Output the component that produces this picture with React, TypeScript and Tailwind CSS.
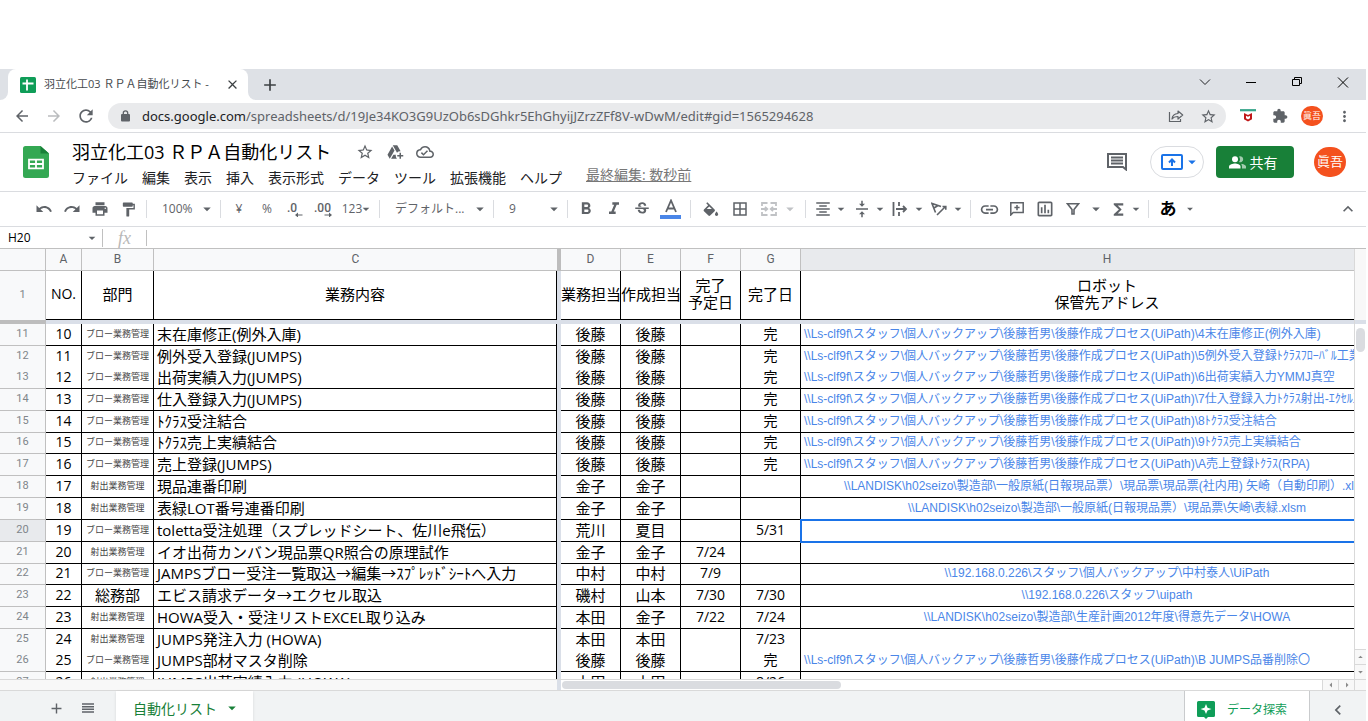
import type { ReactNode } from 'react';
import clsx from 'clsx';
import {
    MdAdd,
    MdArrowBack,
    MdArrowDropDown,
    MdArrowDropUp,
    MdArrowForward,
    MdArrowLeft,
    MdArrowRight,
    MdBorderAll,
    MdClose,
    MdFormatAlignCenter,
    MdFormatBold,
    MdFormatItalic,
    MdFormatPaint,
    MdFunctions,
    MdKeyboardArrowLeft,
    MdKeyboardArrowUp,
    MdLink,
    MdMoreVert,
    MdOutlineAddToDrive,
    MdOutlineCloudDone,
    MdOutlineInsertChartOutlined,
    MdPrint,
    MdRedo,
    MdRefresh,
    MdStarBorder,
    MdStrikethroughS,
    MdUndo,
    MdVerticalAlignCenter,
} from 'react-icons/md';

type Row = {
    n: number;
    no: string;
    dept: string;
    task: string;
    owner: string;
    author: string;
    due?: string;
    done?: string;
    path?: string;
    height?: string;
    open?: boolean;
};

const BLOW = 'ブロー業務管理';
const INJECTION = '射出業務管理';
const BACKUP = '\\\\Ls-clf9f\\スタッフ\\個人バックアップ\\後藤哲男\\後藤作成プロセス(UiPath)\\';
const SHORT = 'h-[21px]';

const rows: Row[] = [
    { n: 11, no: '10', dept: BLOW, task: '末在庫修正(例外入庫)', owner: '後藤', author: '後藤', done: '完', path: BACKUP + '4末在庫修正(例外入庫)' },
    { n: 12, no: '11', dept: BLOW, task: '例外受入登録(JUMPS)', owner: '後藤', author: '後藤', done: '完', path: BACKUP + '5例外受入登録ﾄｸﾗｽﾌﾛｰﾊﾞﾙ工業', open: true },
    { n: 13, no: '12', dept: BLOW, task: '出荷実績入力(JUMPS)', owner: '後藤', author: '後藤', done: '完', path: BACKUP + '6出荷実績入力YMMJ真空', height: SHORT },
    { n: 14, no: '13', dept: BLOW, task: '仕入登録入力(JUMPS)', owner: '後藤', author: '後藤', done: '完', path: BACKUP + '7仕入登録入力ﾄｸﾗｽ射出-ｴｸｾﾙ工' },
    { n: 15, no: '14', dept: BLOW, task: 'ﾄｸﾗｽ受注結合', owner: '後藤', author: '後藤', done: '完', path: BACKUP + '8ﾄｸﾗｽ受注結合' },
    { n: 16, no: '15', dept: BLOW, task: 'ﾄｸﾗｽ売上実績結合', owner: '後藤', author: '後藤', done: '完', path: BACKUP + '9ﾄｸﾗｽ売上実績結合', height: SHORT },
    { n: 17, no: '16', dept: BLOW, task: '売上登録(JUMPS)', owner: '後藤', author: '後藤', done: '完', path: BACKUP + 'A売上登録ﾄｸﾗｽ(RPA)' },
    { n: 18, no: '17', dept: INJECTION, task: '現品連番印刷', owner: '金子', author: '金子', path: '\\\\LANDISK\\h02seizo\\製造部\\一般原紙(日報現品票）\\現品票\\現品票(社内用) 矢崎（自動印刷）.xlsm' },
    { n: 19, no: '18', dept: INJECTION, task: '表緑LOT番号連番印刷', owner: '金子', author: '金子', path: '\\\\LANDISK\\h02seizo\\製造部\\一般原紙(日報現品票）\\現品票\\矢崎\\表緑.xlsm' },
    { n: 20, no: '19', dept: BLOW, task: 'toletta受注処理（スプレッドシート、佐川e飛伝）', owner: '荒川', author: '夏目', done: '5/31' },
    { n: 21, no: '20', dept: INJECTION, task: 'イオ出荷カンバン現品票QR照合の原理試作', owner: '金子', author: '金子', due: '7/24' },
    { n: 22, no: '21', dept: BLOW, task: 'JAMPSブロー受注一覧取込→編集→ｽﾌﾟﾚｯﾄﾞｼｰﾄへ入力', owner: '中村', author: '中村', due: '7/9', path: '\\\\192.168.0.226\\スタッフ\\個人バックアップ\\中村泰人\\UiPath', height: SHORT },
    { n: 23, no: '22', dept: '総務部', task: 'エビス請求データ→エクセル取込', owner: '磯村', author: '山本', due: '7/30', done: '7/30', path: '\\\\192.168.0.226\\スタッフ\\uipath' },
    { n: 24, no: '23', dept: INJECTION, task: 'HOWA受入・受注リストEXCEL取り込み', owner: '本田', author: '金子', due: '7/22', done: '7/24', path: '\\\\LANDISK\\h02seizo\\製造部\\生産計画2012年度\\得意先データ\\HOWA' },
    { n: 25, no: '24', dept: INJECTION, task: 'JUMPS発注入力 (HOWA)', owner: '本田', author: '本田', done: '7/23', open: true },
    { n: 26, no: '25', dept: BLOW, task: 'JUMPS部材マスタ削除', owner: '後藤', author: '後藤', done: '完', path: BACKUP + 'B JUMPS品番削除〇', height: SHORT },
    { n: 27, no: '26', dept: INJECTION, task: 'JUMPS出荷実績入力 (HOWA)', owner: '本田', author: '本田', done: '8/26' },
];

const menus = ['ファイル', '編集', '表示', '挿入', '表示形式', 'データ', 'ツール', '拡張機能', 'ヘルプ'];

function Tool({ label, className, children }: { label: string; className?: string; children: ReactNode }) {
    return (
        <button aria-label={label} className={clsx('flex h-7 shrink-0 items-center justify-center', className ?? 'w-7')}>
            {children}
        </button>
    );
}

function DropTool({ label, children }: { label: string; children: ReactNode }) {
    return (
        <button aria-label={label} className="flex h-7 w-[39px] shrink-0 items-center justify-between pl-1">
            {children}
            <MdArrowDropDown size={16} className="shrink-0" />
        </button>
    );
}

function Picker({ label, value, className }: { label: string; value: string; className: string }) {
    return (
        <label className={clsx('flex h-7 shrink-0 items-center pl-[11px]', className)}>
            <select aria-label={label} className="min-w-0 flex-1 appearance-none bg-transparent text-[12px] outline-none">
                <option>{value}</option>
            </select>
            <MdArrowDropDown size={18} className="shrink-0" />
        </label>
    );
}

function Divider() {
    return <div className="mx-1 h-[18px] w-px shrink-0 bg-[#dadce0]" />;
}

function BrowserTabs() {
    return (
        <div className="flex h-[31px] shrink-0 items-stretch bg-[#dee1e6]">
            <div className="w-2 bg-white">
                <div className="h-full rounded-br-lg bg-[#dee1e6]" />
            </div>
            <div className="flex w-60 items-center rounded-t-lg bg-white pl-3 pr-2">
                <svg width="16" height="16" viewBox="0 0 16 16" className="shrink-0">
                    <rect width="16" height="16" rx="1.5" fill="#0f9d58" />
                    <path d="M7 2.500v11M2.500 6.500h11" stroke="#fff" strokeWidth="1.8" fill="none" />
                </svg>
                <span className="ml-2 flex-1 whitespace-nowrap text-[11px] text-[#45494d]">
                    羽立化工03 ＲＰＡ自動化リスト -
                </span>
                <button aria-label="タブを閉じる" className="text-[#3c4043]">
                    <MdClose size={15} />
                </button>
            </div>
            <div className="w-2 bg-white">
                <div className="h-full rounded-bl-lg bg-[#dee1e6]" />
            </div>
            <button aria-label="新しいタブ" className="ml-1 text-[#3c4043]">
                <MdAdd size={20} />
            </button>
            <div className="ml-auto flex items-start">
                <button aria-label="タブを検索" className="flex h-[26px] w-[46px] items-center justify-center">
                    <svg width="12" height="8" viewBox="0 0 12 8" fill="none" stroke="#202124">
                        <path d="M1 1.500l5 5 5-5" />
                    </svg>
                </button>
                <button aria-label="最小化" className="flex h-[26px] w-[46px] items-center justify-center">
                    <svg width="10" height="10" viewBox="0 0 10 10" stroke="#000">
                        <path d="M0 5.500h10" />
                    </svg>
                </button>
                <button aria-label="元に戻す" className="flex h-[26px] w-[46px] items-center justify-center">
                    <svg width="10" height="10" viewBox="0 0 10 10" fill="none" stroke="#000">
                        <path d="M.5 2.500h7v6h-7zM2.500 2.500v-2h7v6h-2" />
                    </svg>
                </button>
                <button aria-label="閉じる" className="flex h-[26px] w-[46px] items-center justify-center">
                    <svg width="12" height="11" viewBox="0 0 12 11" stroke="#000">
                        <path d="M1 .5l10 10M11 .5L1 10.500" />
                    </svg>
                </button>
            </div>
        </div>
    );
}

function AddressBar() {
    return (
        <div className="flex h-[33px] shrink-0 items-center border-b border-[#dadce0] text-[#5f6368]">
            <div className="flex w-[108px] pl-1.5">
                <Tool label="戻る" className="w-8"><MdArrowBack size={18} /></Tool>
                <Tool label="進む" className="w-8 text-[#babcbe]"><MdArrowForward size={18} /></Tool>
                <Tool label="再読み込み" className="w-8"><MdRefresh size={20} /></Tool>
            </div>
            <div className="flex h-[26px] min-w-0 flex-1 items-center rounded-full bg-[#e9eaec] pl-[13px] pr-2">
                <svg width="9" height="12" viewBox="0 0 9 12" className="shrink-0">
                    <rect y="4" width="9" height="7.500" rx="1" fill="currentColor" />
                    <path d="M2.300 4.500V3a2.200 2.200 0 0 1 4.400 0v1.500" fill="none" stroke="currentColor" strokeWidth="1.300" />
                </svg>
                <span className="ml-3 min-w-0 flex-1 overflow-hidden whitespace-nowrap pt-px font-['Noto_Sans',sans-serif] text-[13px]">
                    <span className="text-[#202124]">docs.google.com</span>
                    /spreadsheets/d/19Je34KO3G9UzOb6sDGhkr5EhGhyijJZrzZFf8V-wDwM/edit#gid=1565294628
                </span>
                <button aria-label="共有" className="flex w-8 justify-center">
                    <svg width="16" height="14" viewBox="0 0 16 14" fill="none" stroke="currentColor" strokeWidth="1.2">
                        <path d="M1.500 3v9.500h11V10" />
                        <path d="M4 10c.3-3.500 2.500-5.300 6-5.500V2l4.700 4L10 10V7.500C7.300 7.500 5.500 8 4 10z" strokeLinejoin="round" />
                    </svg>
                </button>
                <button aria-label="ブックマーク" className="ml-1.5 flex w-5 justify-center"><MdStarBorder size={17} /></button>
            </div>
            <div className="flex items-center pl-1.5">
                <Tool label="拡張機能 1" className="w-8">
                    <svg width="16" height="14" viewBox="0 0 16 14">
                        <path d="M0 1.200h16" stroke="#35a48a" strokeWidth="2.200" />
                        <path d="M4 4v6.200l4 2.300 4-2.300V4L8 6z" fill="#c01818" />
                        <path d="M6 6.700v2.600l2 1.200 2-1.200V6.700L8 7.700z" fill="#fff" />
                    </svg>
                </Tool>
                <Tool label="拡張機能" className="w-8">
                    <svg width="16" height="16" viewBox="0 0 24 24" fill="currentColor">
                        <path d="M20.500 11H19V7c0-1.100-.9-2-2-2h-4V3.500C13 2.120 11.880 1 10.500 1S8 2.120 8 3.500V5H4c-1.100 0-2 .9-2 2v3.800h1.500c1.490 0 2.700 1.210 2.700 2.700s-1.210 2.700-2.700 2.700H2V20c0 1.100.9 2 2 2h3.800v-1.500c0-1.490 1.210-2.700 2.700-2.700s2.700 1.210 2.700 2.700V22H17c1.100 0 2-.9 2-2v-4h1.500c1.380 0 2.500-1.120 2.500-2.500S21.880 11 20.500 11z" />
                    </svg>
                </Tool>
                <Tool label="プロフィール" className="w-8">
                    <span className="flex h-5 w-[22px] items-center justify-center rounded-full bg-[#f4511e] text-[9px] text-white">眞吾</span>
                </Tool>
                <Tool label="メニュー" className="mr-1.5 w-8"><MdMoreVert size={17} /></Tool>
            </div>
        </div>
    );
}

function DocHeader() {
    return (
        <header className="flex h-[59px] shrink-0 items-center border-b border-[#dadce0] pl-[23px] pr-5">
            <a href="#home" aria-label="スプレッドシート ホーム">
                <svg width="26" height="32" viewBox="0 0 26 32">
                    <path d="M2.500 0H17.500L26 7.500V29.500A2.500 2.500 0 0 1 23.500 32H2.500A2.500 2.500 0 0 1 0 29.500V2.500A2.500 2.500 0 0 1 2.500 0z" fill="#34a853" />
                    <path d="M17.500 0L26 7.500H17.500z" fill="#188038" />
                    <path d="M6 13.700h14v8.600H6zM13 13.700v8.600M6 18h14" fill="none" stroke="#fff" strokeWidth="1.800" />
                </svg>
            </a>
            <div className="ml-[23px] pt-1">
                <div className="flex h-[26px] items-center text-[#5f6368]">
                    <input aria-label="名前を変更" defaultValue="羽立化工03 ＲＰＡ自動化リスト" className="w-[278px] bg-transparent text-[18px] text-black outline-none" />
                    <Tool label="スターを付ける" className="w-[30px]"><MdStarBorder size={18} /></Tool>
                    <Tool label="移動" className="w-[30px]"><MdOutlineAddToDrive size={18} /></Tool>
                    <Tool label="保存状況" className="w-[30px]"><MdOutlineCloudDone size={18} /></Tool>
                </div>
                <nav className="flex h-6 items-center gap-3.5 whitespace-nowrap text-[14px] text-[#202124]">
                    {menus.map((menu) => (
                        <button key={menu}>{menu}</button>
                    ))}
                    <a href="#history" className="mb-1.5 ml-2.5 text-[#777] underline">最終編集: 数秒前</a>
                </nav>
            </div>
            <div className="ml-auto flex items-center">
                <button aria-label="コメント履歴" className="text-[#5f6368]">
                    <svg width="20" height="18" viewBox="0 0 20 18" fill="none" stroke="currentColor" strokeWidth="2">
                        <path d="M1 1h18v15.500L16 14H1z" />
                        <path d="M4 4.500h12M4 7.500h12M4 10.500h12" strokeWidth="1.800" />
                    </svg>
                </button>
                <button aria-label="会議で表示" className="ml-[23px] flex h-8 w-[54px] items-center justify-center rounded-full border border-[#dadce0] pl-2 text-[#1a73e8]">
                    <svg width="22" height="16" viewBox="0 0 22 16" fill="none" stroke="currentColor" strokeWidth="2">
                        <rect x="1" y="1" width="20" height="14" rx="1" />
                        <path d="M11 12V6M8 8.500l3-3 3 3" />
                    </svg>
                    <MdArrowDropDown size={18} />
                </button>
                <button className="ml-3 flex h-8 w-[78px] items-center justify-center gap-1 rounded bg-[#188038] pr-1 text-[14px] text-white">
                    <svg width="17" height="13" viewBox="0 0 17 13" fill="currentColor">
                        <circle cx="6" cy="3.200" r="3" />
                        <path d="M0 12.500V10.500C0 8.500 4 7.500 6 7.500s5.500 1 5.500 3v2z" />
                        <path d="M10 .5a3 3 0 1 1 0 5.500 4.500 4.500 0 0 0 0-5.500zM12 7.700c2 .3 5 1.200 5 2.900v1.900h-4v-2c0-1.200-.4-2.100-1-2.800z" opacity=".6" />
                    </svg>
                    共有
                </button>
                <button className="ml-5 flex h-[30px] w-8 shrink-0 items-center justify-center rounded-full bg-[#f4511e] text-[13px] text-white">
                    眞吾
                </button>
            </div>
        </header>
    );
}

function Toolbar() {
    return (
        <div className="flex h-[35px] shrink-0 items-center border-b border-[#dadce0] pl-[30px] pr-2 text-[12px] text-[#5f6368]">
            <Tool label="元に戻す"><MdUndo size={18} /></Tool>
            <Tool label="やり直し"><MdRedo size={18} /></Tool>
            <Tool label="印刷"><MdPrint size={18} /></Tool>
            <Tool label="書式を貼り付け"><MdFormatPaint size={17} /></Tool>
            <Divider />
            <Picker label="ズーム" value="100%" className="w-[65px]" />
            <Divider />
            <Tool label="通貨の表示形式">¥</Tool>
            <Tool label="パーセント">%</Tool>
            <Tool label="小数点以下の桁数を減らす">
                <svg width="16" height="16" viewBox="0 0 16 16" fill="currentColor">
                    <text x="0" y="11" fontSize="12" fontWeight="500" fontFamily="Roboto">.0</text>
                    <path d="M8 14l3-2.500v2h4.500v1H11v2z" />
                </svg>
            </Tool>
            <Tool label="小数点以下の桁数を増やす">
                <svg width="18" height="16" viewBox="0 0 18 16" fill="currentColor">
                    <text x="0" y="11" fontSize="12" fontWeight="500" fontFamily="Roboto">.00</text>
                    <path d="M18 14l-3-2.500v2h-4.500v1H15v2z" />
                </svg>
            </Tool>
            <Tool label="表示形式の詳細" className="w-[38px]">
                <span>123</span>
                <MdArrowDropDown size={16} className="-mx-1" />
            </Tool>
            <Divider />
            <Picker label="フォント" value="デフォルト..." className="w-[105px]" />
            <Divider />
            <Picker label="フォントサイズ" value="9" className="w-[65px]" />
            <Divider />
            <Tool label="太字"><MdFormatBold size={20} /></Tool>
            <Tool label="斜体"><MdFormatItalic size={20} /></Tool>
            <Tool label="取り消し線"><MdStrikethroughS size={18} /></Tool>
            <Tool label="テキストの色" className="w-[30px]">
                <svg width="22" height="20" viewBox="0 0 22 20">
                    <path d="M6 13L11 1.500 16 13M8 9.500h6" fill="none" stroke="currentColor" strokeWidth="1.800" />
                    <rect y="16" width="21" height="4" fill="#4a86e8" />
                </svg>
            </Tool>
            <Divider />
            <Tool label="塗りつぶしの色" className="w-[30px]">
                <svg width="17" height="15" viewBox="1 0 21 18" fill="currentColor">
                    <path d="M16.560 8.940L7.620 0 6.210 1.410l2.380 2.380-5.150 5.150c-.59.59-.59 1.540 0 2.120l5.500 5.500c.29.29.68.44 1.060.44s.77-.15 1.060-.44l5.500-5.500c.59-.58.59-1.530 0-2.120zM6.800 8.400L10 5.210l3.200 3.200zM19 11.500s-2 2.170-2 3.500c0 1.100.9 2 2 2s2-.9 2-2c0-1.330-2-3.500-2-3.500z" />
                </svg>
            </Tool>
            <Tool label="枠線" className="w-[30px]"><MdBorderAll size={18} /></Tool>
            <Tool label="セルを結合" className="w-[46px] pl-1 text-[#c0c2c5]">
                <svg width="16" height="14" viewBox="0 0 16 14" fill="none" stroke="currentColor" strokeWidth="1.800">
                    <path d="M6.500 1H1v3M9.500 1H15v3M6.500 13H1v-3M9.500 13H15v-3M0 7h6M16 7h-6M4 4.800L6.300 7 4 9.200M12 4.800L9.700 7l2.300 2.200" />
                </svg>
                <MdArrowDropDown size={18} className="ml-1" />
            </Tool>
            <Divider />
            <DropTool label="水平方向の配置"><MdFormatAlignCenter size={18} /></DropTool>
            <DropTool label="垂直方向の配置"><MdVerticalAlignCenter size={18} /></DropTool>
            <DropTool label="テキストを折り返す">
                <svg width="16" height="14" viewBox="0 0 16 14" fill="none" stroke="currentColor" strokeWidth="1.800">
                    <path d="M1.500 0v14M7 0v4M7 10v4M4 7h10M11 4l3 3-3 3" />
                </svg>
            </DropTool>
            <DropTool label="テキストの回転">
                <svg width="17" height="14" viewBox="0 0 17 14" fill="none" stroke="currentColor" strokeWidth="1.600">
                    <path d="M4.500 10.500L1 1.500l9 3M3 6l4-2.500M6 13l8.500-8.500M11.500 4.500h3.300v3.300" />
                </svg>
            </DropTool>
            <Divider />
            <Tool label="リンクを挿入"><MdLink size={21} /></Tool>
            <Tool label="コメントを挿入">
                <svg width="14" height="14" viewBox="0 0 14 14" fill="none" stroke="currentColor" strokeWidth="1.500">
                    <path d="M.8.8h12.400v9.700H3.200L.8 13zM7 3v5.200M4.400 5.600h5.200" />
                </svg>
            </Tool>
            <Tool label="グラフを挿入"><MdOutlineInsertChartOutlined size={20} /></Tool>
            <Tool label="フィルタを作成">
                <svg width="14" height="14" viewBox="0 0 14 14" fill="none" stroke="currentColor" strokeWidth="1.600">
                    <path d="M1.500 1.800h11L8 7.500V12H6V7.500z" />
                </svg>
            </Tool>
            <Tool label="フィルタ表示" className="w-[18px]"><MdArrowDropDown size={18} /></Tool>
            <DropTool label="関数"><MdFunctions size={19} /></DropTool>
            <Divider />
            <Tool label="入力ツール" className="w-[50px]">
                <span className="text-[17px] font-bold text-black">あ</span>
                <MdArrowDropDown size={14} className="ml-1.5" />
            </Tool>
            <Tool label="メニューを非表示" className="ml-auto"><MdKeyboardArrowUp size={20} /></Tool>
        </div>
    );
}

function FormulaBar() {
    return (
        <div className="flex h-[22px] shrink-0 items-center border-b border-[#c0c0c0]">
            <input aria-label="名前ボックス" defaultValue="H20" className="w-[84px] bg-transparent pl-2 text-[12px] text-black outline-none" />
            <MdArrowDropDown size={16} className="text-[#5f6368]" />
            <div className="ml-0.5 h-[18px] w-px bg-[#c0c0c0]" />
            <label htmlFor="formula" className="w-[43px] text-center font-['Liberation_Serif',serif] text-[18px] italic leading-5 text-[#b8b8b8]">
                fx
            </label>
            <div className="h-4 w-px bg-[#c0c0c0]" />
            <input id="formula" className="min-w-0 flex-1 px-2 text-[12px] outline-none" />
        </div>
    );
}

const cell = 'overflow-hidden whitespace-nowrap border-r border-black p-0 pb-0.5 text-center font-normal';
const colHead = 'border-b border-r border-[#c0c0c0] p-0 pb-0.5 font-normal';
const rowHead = "border-r border-[#c0c0c0] p-0 pb-0.5 font-['Roboto',sans-serif] text-[11px] font-normal text-[#80868b]";

function Sheet() {
    return (
        <table className="w-[1414px] table-fixed border-separate border-spacing-0 font-['Open_Sans','Noto_Sans_CJK_JP',sans-serif] text-[15px] leading-[18px] text-black">
            <colgroup>
                <col className="w-[46px]" />
                <col className="w-9" />
                <col className="w-[72px]" />
                <col className="w-[403px]" />
                <col className="w-1" />
                <col className="w-[60px]" />
                <col className="w-[60px]" />
                <col className="w-[60px]" />
                <col className="w-[60px]" />
                <col />
            </colgroup>
            <thead>
                <tr className="h-[22px] bg-[#f8f9fa] font-['Roboto',sans-serif] text-[12px] text-[#5f6368]">
                    <th className={colHead} />
                    <th className={colHead}>A</th>
                    <th className={colHead}>B</th>
                    <th className="border-b border-[#c0c0c0] p-0 pb-0.5 font-normal">C</th>
                    <th className="bg-[#bdbdbd] p-0" />
                    <th className={colHead}>D</th>
                    <th className={colHead}>E</th>
                    <th className={colHead}>F</th>
                    <th className={colHead}>G</th>
                    <th className={clsx(colHead, 'bg-[#e8eaed]')}>H</th>
                </tr>
                <tr className="h-[49px]">
                    <th className={clsx(rowHead, 'bg-[#f8f9fa]')}>1</th>
                    <th className={clsx(cell, 'border-b text-[14px]')}>NO.</th>
                    <th className={clsx(cell, 'border-b')}>部門</th>
                    <th className={clsx(cell, 'border-b')}>業務内容</th>
                    <th className="bg-[#dadfe8] p-0" />
                    <th className={clsx(cell, 'border-b')}>業務担当</th>
                    <th className={clsx(cell, 'border-b')}>作成担当</th>
                    <th className={clsx(cell, 'border-b leading-[17px]')}>完了<br />予定日</th>
                    <th className={clsx(cell, 'border-b')}>完了日</th>
                    <th className={clsx(cell, 'border-b leading-[17px]')}>ロボット<br />保管先アドレス</th>
                </tr>
                <tr className="h-1">
                    <th className="bg-[#bdbdbd] p-0" />
                    <th colSpan={9} className="bg-[#dadfe8] p-0" />
                </tr>
            </thead>
            <tbody>
                {rows.map((row) => {
                    const selected = row.n === 20;
                    const line = row.open ? '' : 'border-b';
                    return (
                        <tr key={row.n} className={row.height ?? 'h-[22px]'}>
                            <th scope="row" className={clsx(rowHead, line, selected ? 'bg-[#e8eaed]' : 'bg-[#f8f9fa]')}>
                                {row.n}
                            </th>
                            <td className={clsx(cell, line, 'text-[14px]')}>{row.no}</td>
                            <td className={clsx(cell, line, row.dept !== '総務部' && 'text-[9px] text-[#444]')}>{row.dept}</td>
                            <td className={clsx(cell, line, 'pl-[3px] text-left')}>{row.task}</td>
                            <td className="bg-[#dadfe8] p-0" />
                            <td className={clsx(cell, line)}>{row.owner}</td>
                            <td className={clsx(cell, line)}>{row.author}</td>
                            <td className={clsx(cell, line, 'text-[14px]')}>{row.due}</td>
                            <td className={clsx(cell, line, 'text-[14px]')}>{row.done}</td>
                            <td
                                className={clsx(
                                    cell,
                                    line,
                                    "font-['Liberation_Sans','Noto_Sans_CJK_JP',sans-serif] text-[12px] text-[#4a86e8]",
                                    row.path?.startsWith(BACKUP) && 'pl-[3px] text-left',
                                    selected && 'outline-2 -outline-offset-1 outline-[#1a73e8]',
                                )}
                            >
                                {row.path}
                            </td>
                        </tr>
                    );
                })}
            </tbody>
        </table>
    );
}

function VerticalScroll() {
    return (
        <div className="flex w-3 shrink-0 flex-col border-l border-[#d9d9d9] text-[#8a8a8a]">
            <div className="h-[71px] bg-[#f8f8f8]" />
            <div className="h-1 bg-[#dadfe8]" />
            <div className="mx-px mt-1 h-6 rounded-full bg-[#dadce0]" />
            <button aria-label="上へ" className="mt-auto flex h-[15px] items-center justify-center border-t border-[#d9d9d9] bg-[#f8f8f8]">
                <MdArrowDropUp size={12} />
            </button>
            <button aria-label="下へ" className="flex h-[15px] items-center justify-center border-t border-[#d9d9d9] bg-[#f8f8f8]">
                <MdArrowDropDown size={12} />
            </button>
        </div>
    );
}

function HorizontalScroll() {
    return (
        <div className="flex h-3 shrink-0 border-y border-[#d9d9d9] text-[#8a8a8a]">
            <div className="w-[557px] shrink-0 bg-[#f8f8f8]" />
            <div className="w-1 shrink-0 bg-[#dadfe8]" />
            <div className="ml-px mt-px h-2 w-[279px] rounded-full bg-[#dadce0]" />
            <button aria-label="左へ" className="ml-auto flex w-4 items-center justify-center border-l border-[#d9d9d9] bg-[#f8f8f8]">
                <MdArrowLeft size={12} />
            </button>
            <button aria-label="右へ" className="flex w-4 items-center justify-center border-l border-[#d9d9d9] bg-[#f8f8f8]">
                <MdArrowRight size={12} />
            </button>
            <div className="w-3 border-l border-[#d9d9d9] bg-[#f8f8f8]" />
        </div>
    );
}

function SheetTabs() {
    return (
        <footer className="flex h-[30px] shrink-0 items-stretch bg-[#f1f3f4] text-[#5f6368]">
            <div className="flex items-center pl-[42px] pt-1">
                <Tool label="シートを追加"><MdAdd size={17} /></Tool>
                <Tool label="すべてのシート" className="ml-1 w-7">
                    <svg width="12" height="10" viewBox="0 0 12 10" stroke="currentColor" strokeWidth="1.500">
                        <path d="M0 1h12M0 3.700h12M0 6.300h12M0 9h12" />
                    </svg>
                </Tool>
            </div>
            <button className="ml-[14px] flex w-[137px] items-center bg-white pl-[17px] pt-1 text-[14px] text-[#188038] shadow">
                自動化リスト
                <MdArrowDropDown size={18} className="ml-1.5" />
            </button>
            <button className="ml-auto flex w-[126px] items-center border-x border-[#c9cbcd] bg-white pl-3 pt-2 text-[12px] text-[#0f9d58]">
                <svg width="18" height="18" viewBox="0 0 18 18">
                    <path d="M1.500 0h15A1.500 1.500 0 0 1 18 1.500v13a1.500 1.500 0 0 1-1.500 1.500H11l-2 2-2-2H1.500A1.500 1.500 0 0 1 0 14.500v-13A1.500 1.500 0 0 1 1.500 0z" fill="#0f9d58" />
                    <path d="M9 3l1.500 3.800L14.500 8l-4 1.500L9 13 7.500 9.500 3.500 8l4-1.200z" fill="#fff" />
                </svg>
                <span className="ml-3">データ探索</span>
            </button>
            <button aria-label="サイドパネルを表示" className="flex w-14 items-center justify-center pt-2">
                <MdKeyboardArrowLeft size={20} />
            </button>
        </footer>
    );
}

export default function App() {
    return (
        <div className="flex h-screen flex-col overflow-hidden bg-white pr-0.5 pt-[69px] font-['Open_Sans','Noto_Sans_CJK_JP',sans-serif]">
            <BrowserTabs />
            <AddressBar />
            <DocHeader />
            <Toolbar />
            <FormulaBar />
            <main className="flex min-h-0 flex-1">
                <div className="min-w-0 flex-1 overflow-hidden">
                    <Sheet />
                </div>
                <VerticalScroll />
            </main>
            <HorizontalScroll />
            <SheetTabs />
        </div>
    );
}
